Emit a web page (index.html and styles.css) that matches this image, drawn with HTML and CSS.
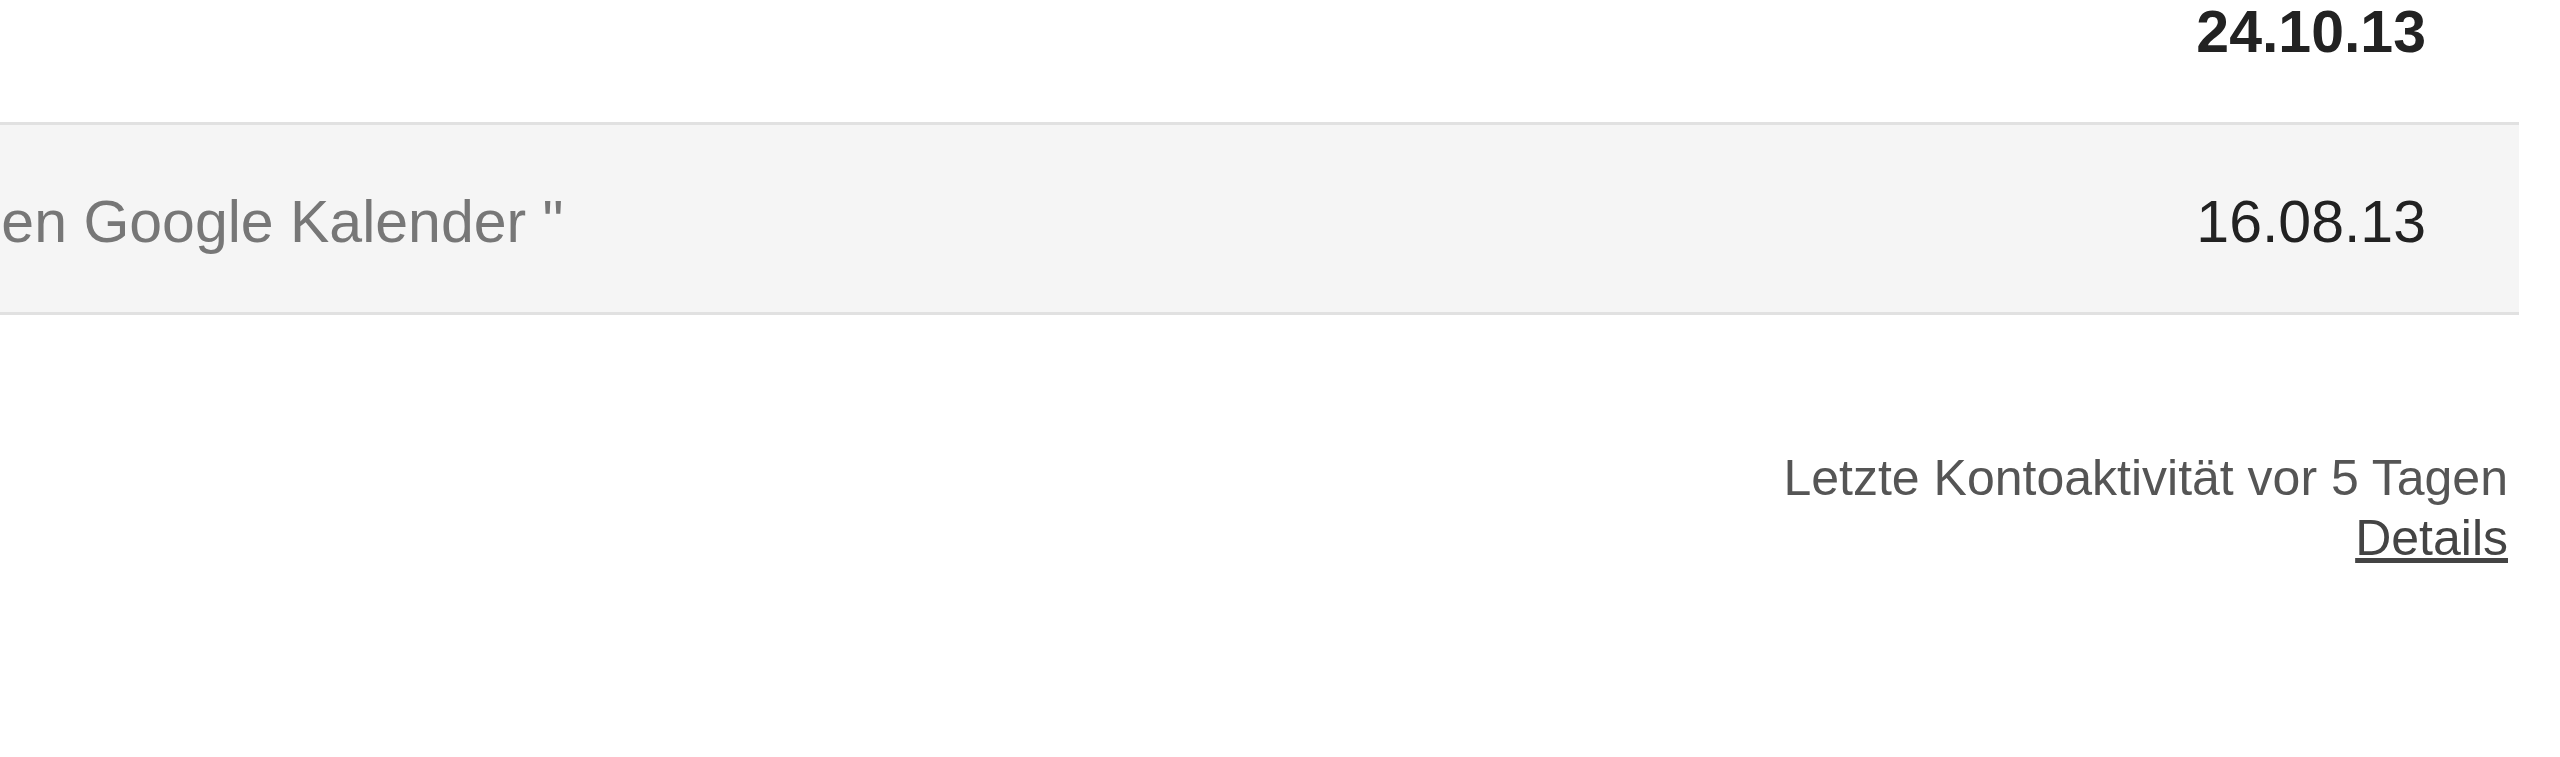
FILE: index.html
```html
<!DOCTYPE html>
<html lang="de">
<head>
    <meta charset="UTF-8">
    <title>Posteingang</title>
    <link rel="stylesheet" href="styles.css">
</head>
<body>
    <div class="inbox">
        <div class="row unread">
            <span class="sender">Google-Team</span>
            <span class="subject">Hallo!</span>
            <span class="date">24.10.13</span>
        </div>
        <div class="row">
            <span class="sender">Google Kalender</span>
            <span class="subject">Termine in den Google Kalender "</span>
            <span class="date">16.08.13</span>
        </div>
    </div>

    <div class="footer">
        <div>Letzte Kontoaktivität vor 5 Tagen</div>
        <a href="#" class="details">Details</a>
    </div>
</body>
</html>
```

FILE: styles.css
```css
body {
    margin: 0;
    overflow: hidden;
    background: #fff;
    font-family: "Liberation Sans", Arial, sans-serif;
}

/* list is scrolled: first row and the left columns lie outside the view */
.inbox {
    margin: -65px 41px 0 -840px;
}

.row {
    display: flex;
    align-items: center;
    box-sizing: border-box;
    height: 190px;
    padding-top: 6px;
    border-bottom: 3px solid #e1e1e1;
    background: #f5f5f5;
    font-size: 59px;
    color: #222;
}
.row.unread {
    background: #fff;
    font-weight: bold;
}

.sender {
    width: 520px;
    flex-shrink: 0;
    white-space: nowrap;
    overflow: hidden;
}
.subject {
    flex: 1;
    white-space: nowrap;
    overflow: hidden;
    color: #777;
}
.unread .subject {
    color: #222;
}
.date {
    padding-right: 93px;
}

.footer {
    margin: 133px 52px 0 0;
    text-align: right;
    font-size: 50px;
    line-height: 60px;
    color: #555;
}
.details {
    color: #444;
}
```
